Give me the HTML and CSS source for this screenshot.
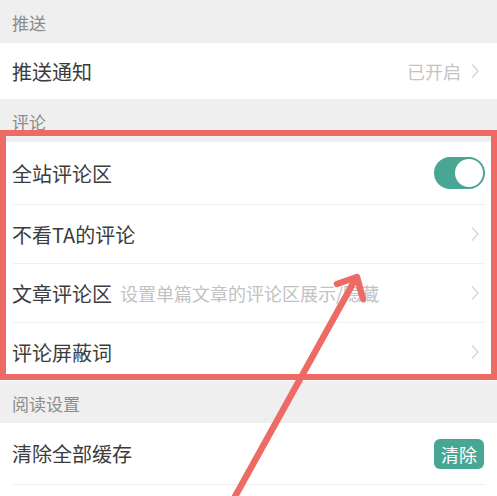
FILE: index.html
```html
<!DOCTYPE html>
<html lang="zh">
<head>
<meta charset="utf-8">
<link rel="stylesheet" href="styles.css">
</head>
<body>
<div class="page">
  <div class="section-header">推送</div>
  <div class="group">
    <div class="row row-push">
      <span class="label">推送通知</span>
      <span class="right"><span class="value">已开启</span><svg class="chev" width="10" height="16" viewBox="0 0 10 16"><polyline points="2,1.5 8,8 2,14.5" fill="none" stroke="#d9d9d9" stroke-width="1.6"/></svg></span>
    </div>
  </div>

  <div class="section-header">评论</div>
  <div class="group">
    <div class="row row-first">
      <span class="label">全站评论区</span>
      <span class="toggle"><span class="knob"></span></span>
    </div>
    <div class="row">
      <span class="label">不看TA的评论</span>
      <svg class="chev" width="10" height="16" viewBox="0 0 10 16"><polyline points="2,1.5 8,8 2,14.5" fill="none" stroke="#d9d9d9" stroke-width="1.6"/></svg>
    </div>
    <div class="row">
      <span class="label">文章评论区<span class="hint">设置单篇文章的评论区展示/隐藏</span></span>
      <svg class="chev" width="10" height="16" viewBox="0 0 10 16"><polyline points="2,1.5 8,8 2,14.5" fill="none" stroke="#d9d9d9" stroke-width="1.6"/></svg>
    </div>
    <div class="row">
      <span class="label">评论屏蔽词</span>
      <svg class="chev" width="10" height="16" viewBox="0 0 10 16"><polyline points="2,1.5 8,8 2,14.5" fill="none" stroke="#d9d9d9" stroke-width="1.6"/></svg>
    </div>
  </div>

  <div class="section-header section-read">阅读设置</div>
  <div class="group">
    <div class="row row-cache">
      <span class="label">清除全部缓存</span>
      <span class="btn">清除</span>
    </div>
    <div class="row"></div>
  </div>

  <div class="highlight"></div>
  <svg class="arrow" width="497" height="496" viewBox="0 0 497 496">
    <line x1="232" y1="502" x2="356" y2="278" stroke="#ee6a64" stroke-width="6.5" stroke-linecap="round"/>
    <polyline points="337,284 357,277 363,299" fill="none" stroke="#ee6a64" stroke-width="6.5" stroke-linecap="round" stroke-linejoin="round"/>
  </svg>
</div>
</body>
</html>
```

FILE: styles.css
```css
html, body {
  margin: 0;
  padding: 0;
}
body {
  background: #efefef;
  font-family: "Noto Sans CJK SC", "Noto Sans", sans-serif;
  overflow: hidden;
}
.page {
  position: relative;
  width: 497px;
  height: 496px;
  overflow: hidden;
}
.section-header {
  height: 43px;
  display: flex;
  align-items: center;
  padding-left: 12px;
  font-size: 17px;
  color: #8c8c8c;
  box-sizing: border-box;
  padding-top: 2px;
}
.section-read {
  height: 42px;
}
.group {
  background: #fff;
  padding: 0 12px;
}
.row {
  height: 58px;
  display: flex;
  align-items: center;
  justify-content: space-between;
}
.row + .row {
  border-top: 1px solid #f1f1f1;
}
.row-push {
  height: 56px;
}
.row-first {
  height: 62px;
}
.row-cache {
  height: 61px;
}
.label {
  font-size: 20px;
  color: #3c3c3c;
  display: flex;
  align-items: center;
}
.hint {
  font-size: 18px;
  color: #c2c2c2;
  margin-left: 8px;
}
.right {
  display: flex;
  align-items: center;
}
.value {
  font-size: 18px;
  color: #c4c4c4;
  margin-right: 9px;
}
.chev {
  margin-right: 5px;
}
.toggle {
  width: 51px;
  height: 32px;
  border-radius: 16px;
  background: #48a794;
  display: flex;
  align-items: center;
  justify-content: flex-end;
  padding: 2px;
  box-sizing: border-box;
}
.knob {
  width: 28px;
  height: 28px;
  border-radius: 50%;
  background: #fff;
}
.btn {
  width: 50px;
  height: 30px;
  border-radius: 6px;
  background: #48a794;
  color: #fff;
  font-size: 18px;
  display: flex;
  align-items: center;
  justify-content: center;
  margin-right: 1px;
}
.highlight {
  position: absolute;
  left: 0;
  top: 130px;
  width: 497px;
  height: 250px;
  border: 6px solid #ee6a64;
  box-sizing: border-box;
}
.arrow {
  position: absolute;
  left: 0;
  top: 0;
}
```
